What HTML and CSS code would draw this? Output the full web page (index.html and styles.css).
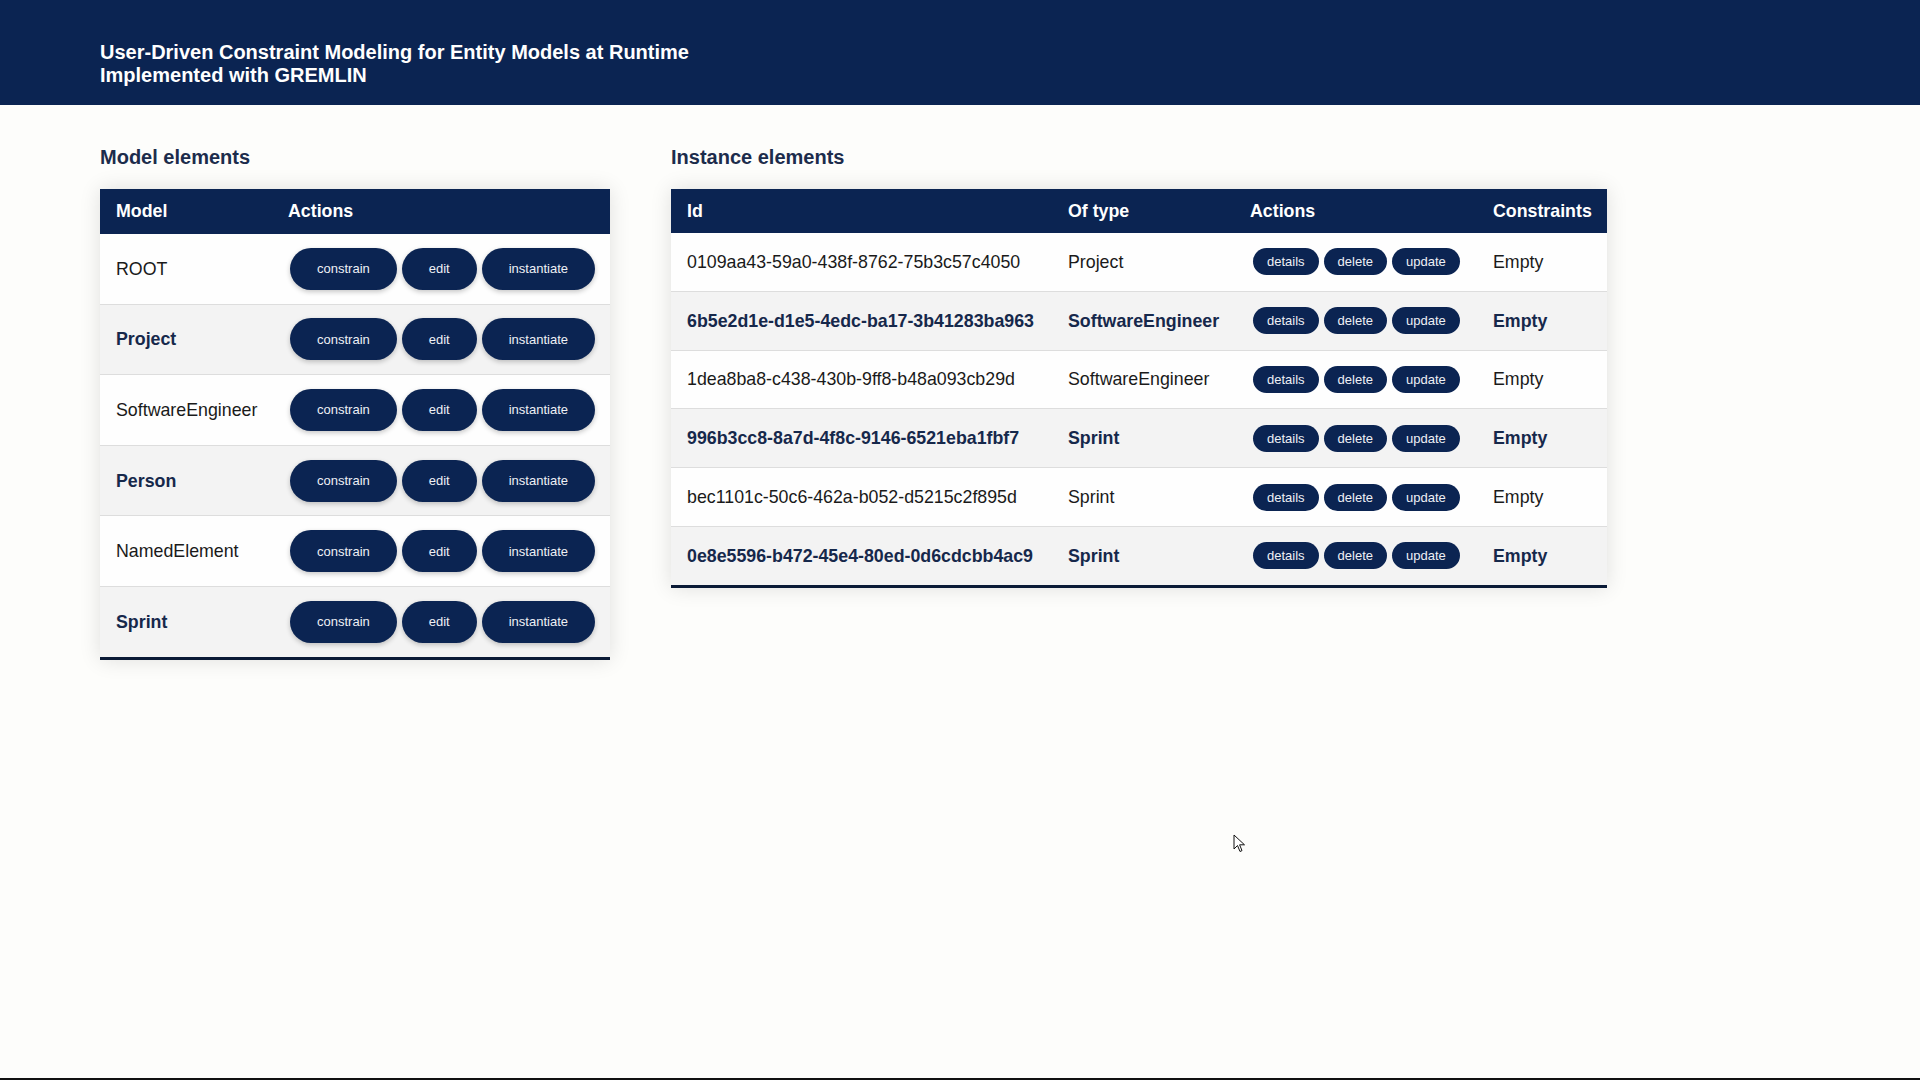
FILE: index.html
```html
<!DOCTYPE html>
<html lang="en">
<head>
<meta charset="utf-8">
<title>User-Driven Constraint Modeling</title>
<link rel="stylesheet" href="styles.css">
</head>
<body>
<div class="page">
  <header class="topbar">
    <h1 class="title">User-Driven Constraint Modeling for Entity Models at Runtime<br>Implemented with GREMLIN</h1>
  </header>
  <main class="content">
    <section class="panel panel-model">
      <h2 class="section-title">Model elements</h2>
      <table class="styled-table model-table">
        <colgroup><col class="mc-name"><col class="mc-actions"></colgroup>
        <thead>
          <tr><th>Model</th><th>Actions</th></tr>
        </thead>
        <tbody>
          <tr><td>ROOT</td><td class="actions"><div class="btns"><button class="btn btn-lg">constrain</button><button class="btn btn-lg">edit</button><button class="btn btn-lg">instantiate</button></div></td></tr>
          <tr><td>Project</td><td class="actions"><div class="btns"><button class="btn btn-lg">constrain</button><button class="btn btn-lg">edit</button><button class="btn btn-lg">instantiate</button></div></td></tr>
          <tr><td>SoftwareEngineer</td><td class="actions"><div class="btns"><button class="btn btn-lg">constrain</button><button class="btn btn-lg">edit</button><button class="btn btn-lg">instantiate</button></div></td></tr>
          <tr><td>Person</td><td class="actions"><div class="btns"><button class="btn btn-lg">constrain</button><button class="btn btn-lg">edit</button><button class="btn btn-lg">instantiate</button></div></td></tr>
          <tr><td>NamedElement</td><td class="actions"><div class="btns"><button class="btn btn-lg">constrain</button><button class="btn btn-lg">edit</button><button class="btn btn-lg">instantiate</button></div></td></tr>
          <tr><td>Sprint</td><td class="actions"><div class="btns"><button class="btn btn-lg">constrain</button><button class="btn btn-lg">edit</button><button class="btn btn-lg">instantiate</button></div></td></tr>
        </tbody>
      </table>
    </section>
    <section class="panel panel-instance">
      <h2 class="section-title">Instance elements</h2>
      <table class="styled-table instance-table">
        <colgroup><col class="ic-id"><col class="ic-type"><col class="ic-actions"><col class="ic-cons"></colgroup>
        <thead>
          <tr><th>Id</th><th>Of type</th><th>Actions</th><th>Constraints</th></tr>
        </thead>
        <tbody>
          <tr><td>0109aa43-59a0-438f-8762-75b3c57c4050</td><td>Project</td><td class="actions"><div class="btns"><button class="btn btn-sm">details</button><button class="btn btn-sm">delete</button><button class="btn btn-sm">update</button></div></td><td>Empty</td></tr>
          <tr><td>6b5e2d1e-d1e5-4edc-ba17-3b41283ba963</td><td>SoftwareEngineer</td><td class="actions"><div class="btns"><button class="btn btn-sm">details</button><button class="btn btn-sm">delete</button><button class="btn btn-sm">update</button></div></td><td>Empty</td></tr>
          <tr><td>1dea8ba8-c438-430b-9ff8-b48a093cb29d</td><td>SoftwareEngineer</td><td class="actions"><div class="btns"><button class="btn btn-sm">details</button><button class="btn btn-sm">delete</button><button class="btn btn-sm">update</button></div></td><td>Empty</td></tr>
          <tr><td>996b3cc8-8a7d-4f8c-9146-6521eba1fbf7</td><td>Sprint</td><td class="actions"><div class="btns"><button class="btn btn-sm">details</button><button class="btn btn-sm">delete</button><button class="btn btn-sm">update</button></div></td><td>Empty</td></tr>
          <tr><td>bec1101c-50c6-462a-b052-d5215c2f895d</td><td>Sprint</td><td class="actions"><div class="btns"><button class="btn btn-sm">details</button><button class="btn btn-sm">delete</button><button class="btn btn-sm">update</button></div></td><td>Empty</td></tr>
          <tr><td>0e8e5596-b472-45e4-80ed-0d6cdcbb4ac9</td><td>Sprint</td><td class="actions"><div class="btns"><button class="btn btn-sm">details</button><button class="btn btn-sm">delete</button><button class="btn btn-sm">update</button></div></td><td>Empty</td></tr>
        </tbody>
      </table>
    </section>
  </main>
  <svg class="cursor" width="13" height="20" viewBox="0 0 13 20" aria-hidden="true">
    <path d="M1 1 L1 15 L4.5 11.5 L7 17.5 L9 16.6 L6.6 10.8 L11.5 10.8 Z" fill="#ffffff" stroke="#111111" stroke-width="1" stroke-linejoin="miter"/>
  </svg>
</div>
</body>
</html>
```
FILE: styles.css
```css
html, body {
  margin: 0;
  padding: 0;
}

body {
  background: #fdfdfb;
  font-family: "Liberation Sans", Arial, sans-serif;
  color: #1a1a1a;
}

.page {
  position: relative;
  min-height: 100vh;
  box-sizing: border-box;
  border-bottom: 2px solid #111;
}

.topbar {
  background: #0b2452;
  padding: 41px 100px 18px;
}

.title {
  margin: 0;
  color: #ffffff;
  font-size: 20px;
  line-height: 23px;
  font-weight: bold;
}

.content {
  display: flex;
  align-items: flex-start;
  gap: 61px;
  padding: 41px 0 0 100px;
}

.section-title {
  margin: 0 0 20px;
  font-size: 20px;
  line-height: 23px;
  font-weight: bold;
  color: #1c2c4c;
}

.panel-model {
  width: 510px;
}

.panel-instance {
  width: 936px;
}

.styled-table {
  border-collapse: collapse;
  table-layout: fixed;
  width: 100%;
  box-shadow: 0 0 20px rgba(0, 0, 0, 0.12);
  text-align: left;
  font-size: 17.8px;
}

.styled-table thead tr {
  background: #0b2452;
  color: #ffffff;
}

.styled-table th {
  font-weight: bold;
  padding: 12px 16px;
  line-height: 20px;
}

.styled-table td {
  line-height: 20px;
  white-space: nowrap;
}

.styled-table tbody tr {
  border-bottom: 1px solid #dddddd;
  background: #fefefe;
}

.styled-table tbody tr:nth-of-type(even) {
  background: #f3f3f3;
  font-weight: bold;
  color: #16284b;
}

.styled-table tbody tr:last-of-type {
  border-bottom: 3px solid #0a1a36;
}

/* Model table */
.mc-name { width: 172px; }
.mc-actions { width: 338px; }

.model-table th {
  padding-top: 11.5px;
  padding-bottom: 13.5px;
}

.model-table td {
  padding: 13.8px 16px;
}

.model-table td.actions {
  padding-left: 18px;
  padding-right: 0;
}

/* Instance table */
.ic-id { width: 381px; }
.ic-type { width: 182px; }
.ic-actions { width: 243px; }
.ic-cons { width: 130px; }

.instance-table td {
  padding: 15.4px 16px;
}

.instance-table td.actions {
  padding-left: 19px;
  padding-right: 0;
}

/* Buttons */
.btns {
  display: flex;
  gap: 5px;
}

.btn {
  border: none;
  margin: 0;
  background: #0b2452;
  color: #eef0f5;
  font-family: "Liberation Sans", Arial, sans-serif;
  font-size: 13px;
  font-weight: normal;
  line-height: 15px;
  cursor: pointer;
  flex: none;
}

.btn-lg {
  height: 42px;
  padding: 0 27px;
  border-radius: 21px;
  box-shadow: 0 2px 5px rgba(0, 0, 0, 0.22);
}

.btn-sm {
  height: 27px;
  padding: 0 14px;
  border-radius: 14px;
}

.cursor {
  position: absolute;
  left: 1233px;
  top: 834px;
}
```
